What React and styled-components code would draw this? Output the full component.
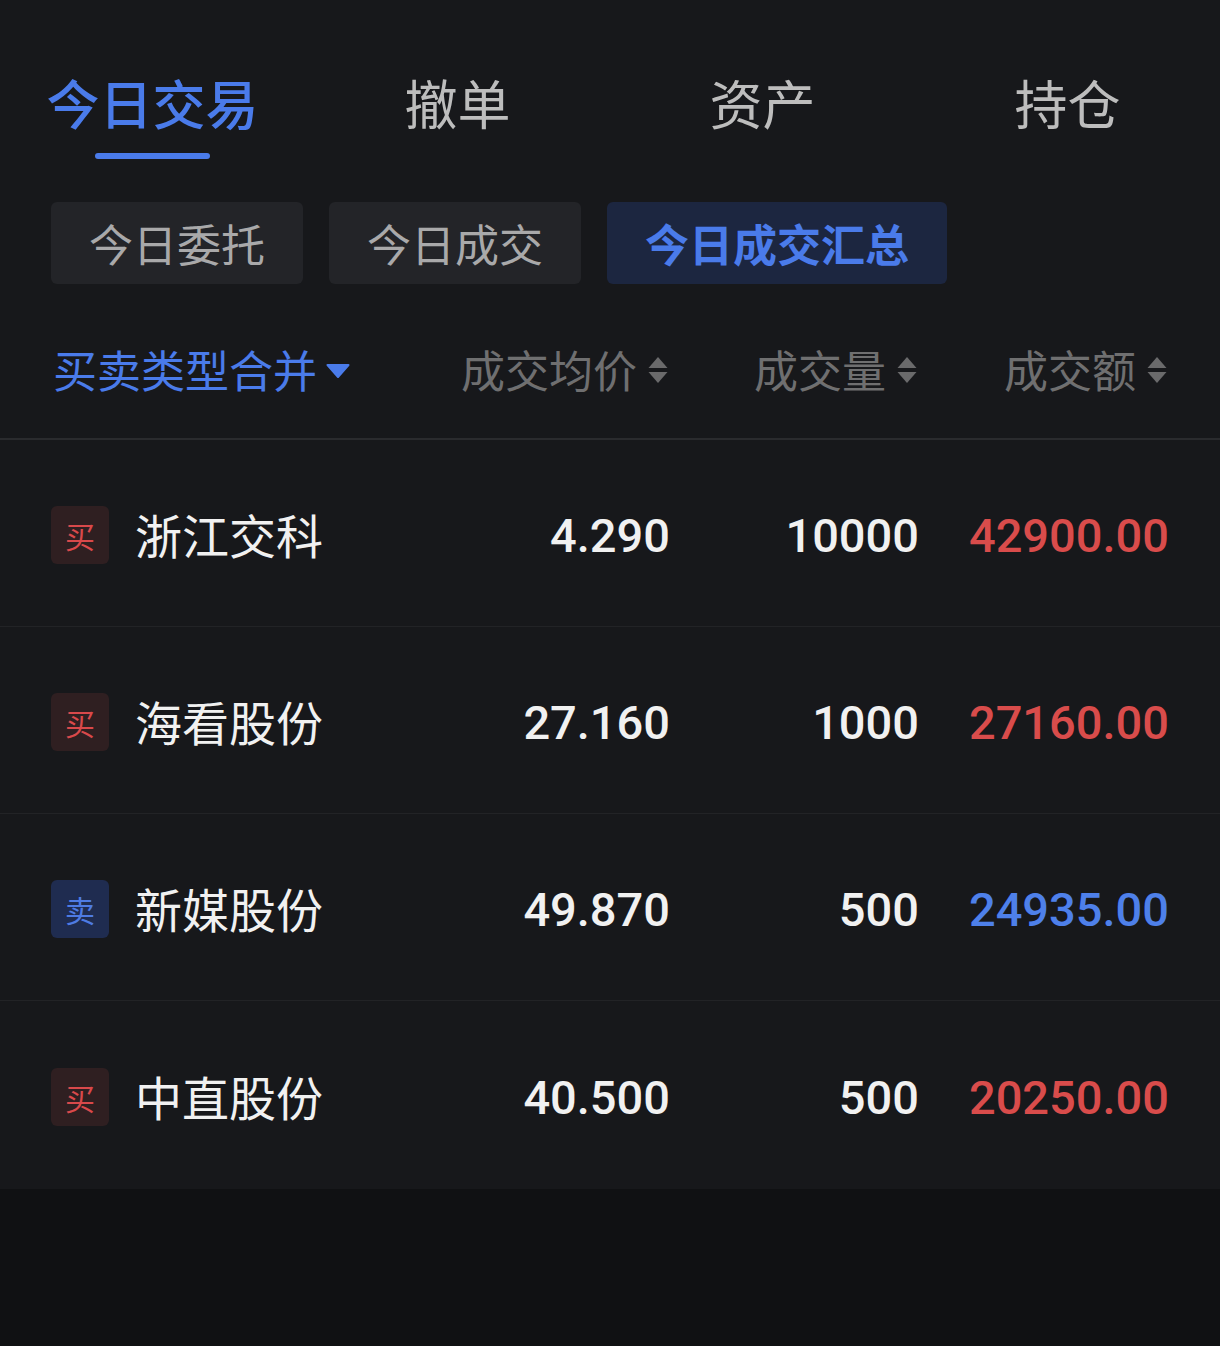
import React from 'react';
import styled, { createGlobalStyle } from 'styled-components';

const GlobalStyle = createGlobalStyle`
  * { margin: 0; padding: 0; box-sizing: border-box; }
  body {
    background: #101113;
    font-family: "Noto Sans CJK SC", "Noto Sans", sans-serif;
  }
`;

const tabs = ['今日交易', '撤单', '资产', '持仓'];
const chips = ['今日委托', '今日成交', '今日成交汇总'];

const rows = [
  { side: 'buy', name: '浙江交科', price: '4.290', vol: '10000', amount: '42900.00' },
  { side: 'buy', name: '海看股份', price: '27.160', vol: '1000', amount: '27160.00' },
  { side: 'sell', name: '新媒股份', price: '49.870', vol: '500', amount: '24935.00' },
  { side: 'buy', name: '中直股份', price: '40.500', vol: '500', amount: '20250.00' },
];

function SortIcon() {
  return (
    <svg width="20" height="27" viewBox="0 0 20 27">
      <path d="M10 0 L19.5 11 L0.5 11 Z" fill="#6a6a6b" />
      <path d="M0.5 15 L19.5 15 L10 26 Z" fill="#6a6a6b" />
    </svg>
  );
}

function Caret() {
  return (
    <svg width="24" height="14" viewBox="0 0 24 14">
      <path d="M1.5 1 L22.5 1 L12 13 Z" fill="#4a7bea" stroke="#4a7bea" strokeWidth="2" strokeLinejoin="round" />
    </svg>
  );
}

function App() {
  return (
    <>
      <GlobalStyle />
      <Page>
        <TabBar>
          {tabs.map((t, i) => (
            <Tab key={t} active={i === 0}>
              <span>{t}</span>
              <Underline active={i === 0} />
            </Tab>
          ))}
        </TabBar>

        <ChipRow>
          {chips.map((c, i) => (
            <Chip key={c} active={i === 2}>{c}</Chip>
          ))}
        </ChipRow>

        <HeaderRow>
          <TypeFilter>
            买卖类型合并
            <Caret />
          </TypeFilter>
          <SortHead>成交均价<SortIcon /></SortHead>
          <SortHead>成交量<SortIcon /></SortHead>
          <SortHead>成交额<SortIcon /></SortHead>
        </HeaderRow>

        {rows.map((r) => (
          <Row key={r.name}>
            <NameCell>
              <Badge side={r.side}>{r.side === 'buy' ? '买' : '卖'}</Badge>
              <Name>{r.name}</Name>
            </NameCell>
            <Num>{r.price}</Num>
            <Num>{r.vol}</Num>
            <Num side={r.side}>{r.amount}</Num>
          </Row>
        ))}
      </Page>
    </>
  );
}

const Page = styled.div`
  background: #17181b;
  width: 1220px;
`;

const TabBar = styled.div`
  display: grid;
  grid-template-columns: repeat(4, 1fr);
  padding-top: 69px;
`;

const Tab = styled.div`
  display: flex;
  flex-direction: column;
  align-items: center;
  span {
    font-size: 53px;
    line-height: 66px;
    color: ${(p) => (p.active ? '#4a7bea' : '#bdbdbd')};
    font-weight: ${(p) => (p.active ? 500 : 400)};
  }
`;

const Underline = styled.div`
  width: 115px;
  height: 6px;
  border-radius: 3px;
  margin-top: 18px;
  background: ${(p) => (p.active ? '#4a7bea' : 'transparent')};
`;

const ChipRow = styled.div`
  display: flex;
  gap: 26px;
  padding: 0 51px;
  margin-top: 43px;
`;

const Chip = styled.div`
  height: 82px;
  padding: 0 38px;
  display: flex;
  align-items: center;
  border-radius: 6px;
  font-size: 44px;
  background: ${(p) => (p.active ? '#1c2640' : '#232428')};
  color: ${(p) => (p.active ? '#4a7bea' : '#a9a9aa')};
  font-weight: ${(p) => (p.active ? 700 : 400)};
`;

const Grid = styled.div`
  display: grid;
  grid-template-columns: 358px 261px 249px 250px;
  padding: 0 51px 0 51px;
  align-items: center;
`;

const HeaderRow = styled(Grid)`
  margin-top: 22px;
  height: 134px;
  padding-bottom: 6px;
  border-bottom: 2px solid #2a2b2e;
  font-size: 44px;
`;

const TypeFilter = styled.div`
  display: flex;
  align-items: center;
  gap: 9px;
  color: #4a7bea;
  padding-left: 2px;
  svg { margin-top: 4px; }
`;

const SortHead = styled.div`
  display: flex;
  align-items: center;
  justify-content: flex-end;
  gap: 11px;
  color: #6f6f70;
  padding-right: 2px;
  svg { margin-top: 2px; }
`;

const Row = styled(Grid)`
  height: 187px;
  padding-top: 4px;
  border-bottom: 1px solid #222326;
  &:last-child { border-bottom: none; height: 188px; }
`;

const NameCell = styled.div`
  display: flex;
  align-items: center;
  gap: 26px;
`;

const Badge = styled.div`
  width: 58px;
  height: 58px;
  border-radius: 6px;
  display: flex;
  align-items: center;
  justify-content: center;
  font-size: 30px;
  background: ${(p) => (p.side === 'buy' ? '#2f1f21' : '#1f2c50')};
  color: ${(p) => (p.side === 'buy' ? '#d9494b' : '#4e7be3')};
`;

const Name = styled.div`
  font-size: 47px;
  color: #f1f1f1;
  margin-top: -3px;
`;

const Num = styled.div`
  text-align: right;
  font-family: Roboto, "Noto Sans", sans-serif;
  font-weight: 500;
  font-size: 47px;
  color: ${(p) => (p.side === 'buy' ? '#d94c4b' : p.side === 'sell' ? '#4e80ea' : '#f1f1f1')};
`;

export default App;
